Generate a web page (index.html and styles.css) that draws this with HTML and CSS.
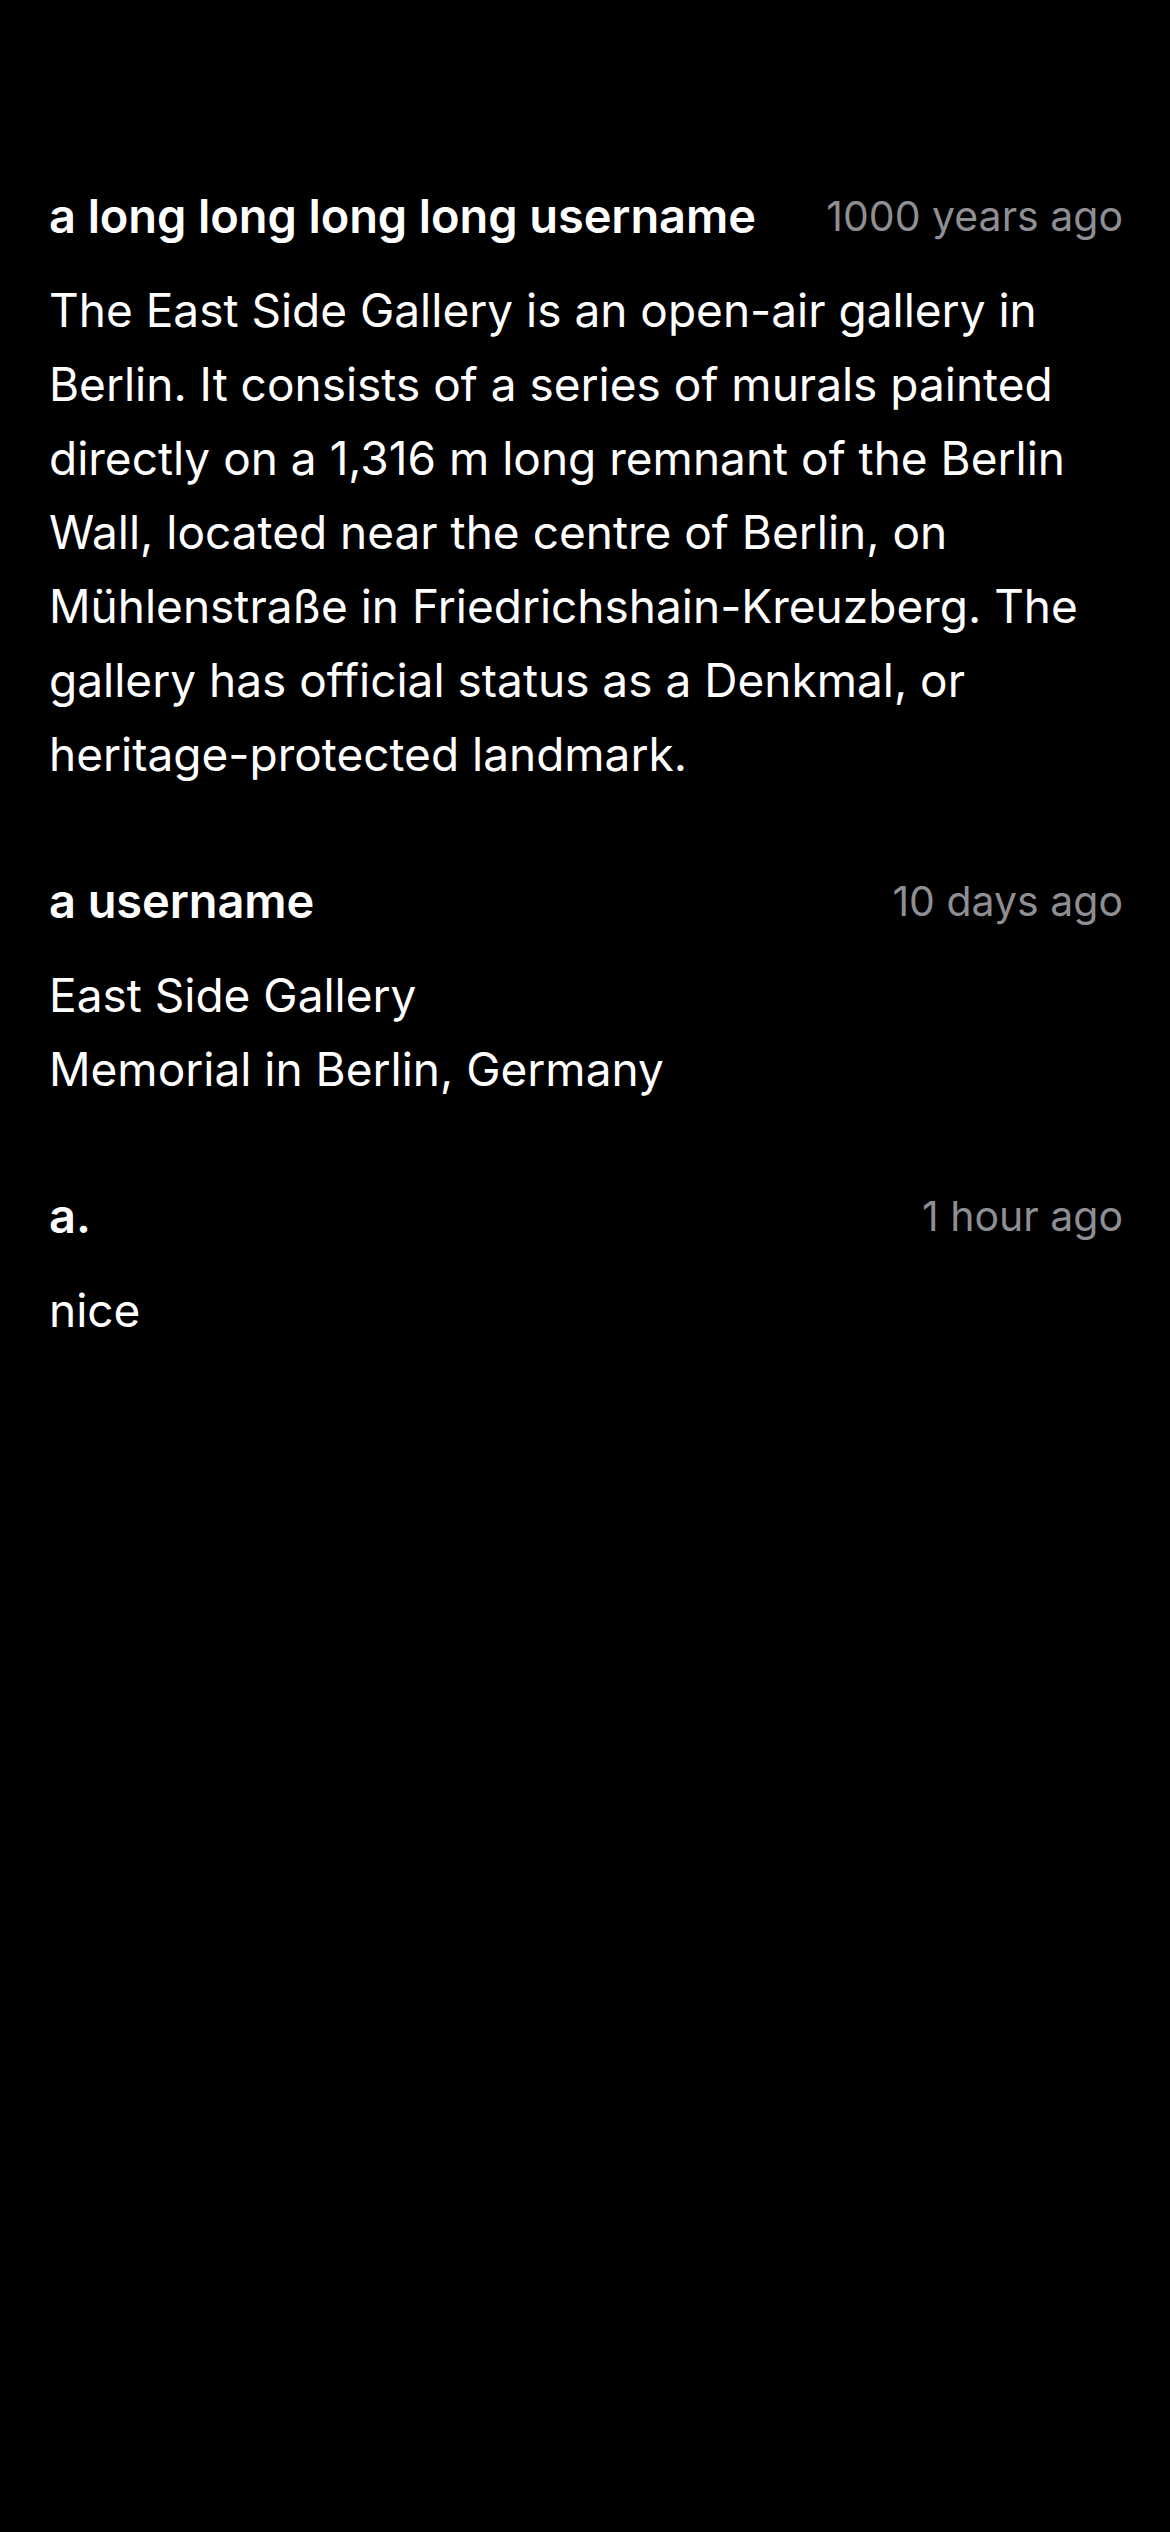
FILE: index.html
```html
<!DOCTYPE html>
<html lang="en">
<head>
<meta charset="utf-8">
<title>Comments</title>
<link rel="stylesheet" href="styles.css">
</head>
<body>
<main class="comments">
  <article class="comment">
    <header class="comment-head">
      <span class="user">a long long long long username</span>
      <span class="time">1000 years ago</span>
    </header>
    <p class="text">The East Side Gallery is an open-air gallery in Berlin. It consists of a series of murals painted directly on a 1,316&nbsp;m long remnant of the Berlin Wall, located near the centre of Berlin, on Mühlenstraße in Friedrichshain-Kreuzberg. The gallery has official status as a Denkmal, or heritage-protected landmark.</p>
  </article>
  <article class="comment">
    <header class="comment-head">
      <span class="user">a username</span>
      <span class="time">10 days ago</span>
    </header>
    <p class="text">East Side Gallery<br>Memorial in Berlin, Germany</p>
  </article>
  <article class="comment">
    <header class="comment-head">
      <span class="user">a.</span>
      <span class="time">1 hour ago</span>
    </header>
    <p class="text">nice</p>
  </article>
</main>
</body>
</html>
```

FILE: styles.css
```css
html, body {
  margin: 0;
  padding: 0;
  background: #000;
}

body {
  width: 1170px;
  min-height: 2532px;
  font-family: "Inter", "Noto Sans", sans-serif;
  color: #fff;
  -webkit-font-smoothing: antialiased;
}

.comments {
  display: flex;
  flex-direction: column;
  gap: 81px;
  padding: 187px 47px 0 49px;
}

.comment {
  display: flex;
  flex-direction: column;
  gap: 28px;
}

.comment-head {
  display: flex;
  align-items: center;
  justify-content: space-between;
  gap: 40px;
  height: 58px;
}

.user {
  font-size: 47px;
  font-weight: 600;
  line-height: 58px;
  letter-spacing: -0.1px;
}

.time {
  font-size: 41px;
  font-weight: 400;
  line-height: 58px;
  color: #8e8e93;
  white-space: nowrap;
}

.text {
  margin: 0;
  font-size: 46px;
  line-height: 74px;
  font-weight: 400;
}
```
